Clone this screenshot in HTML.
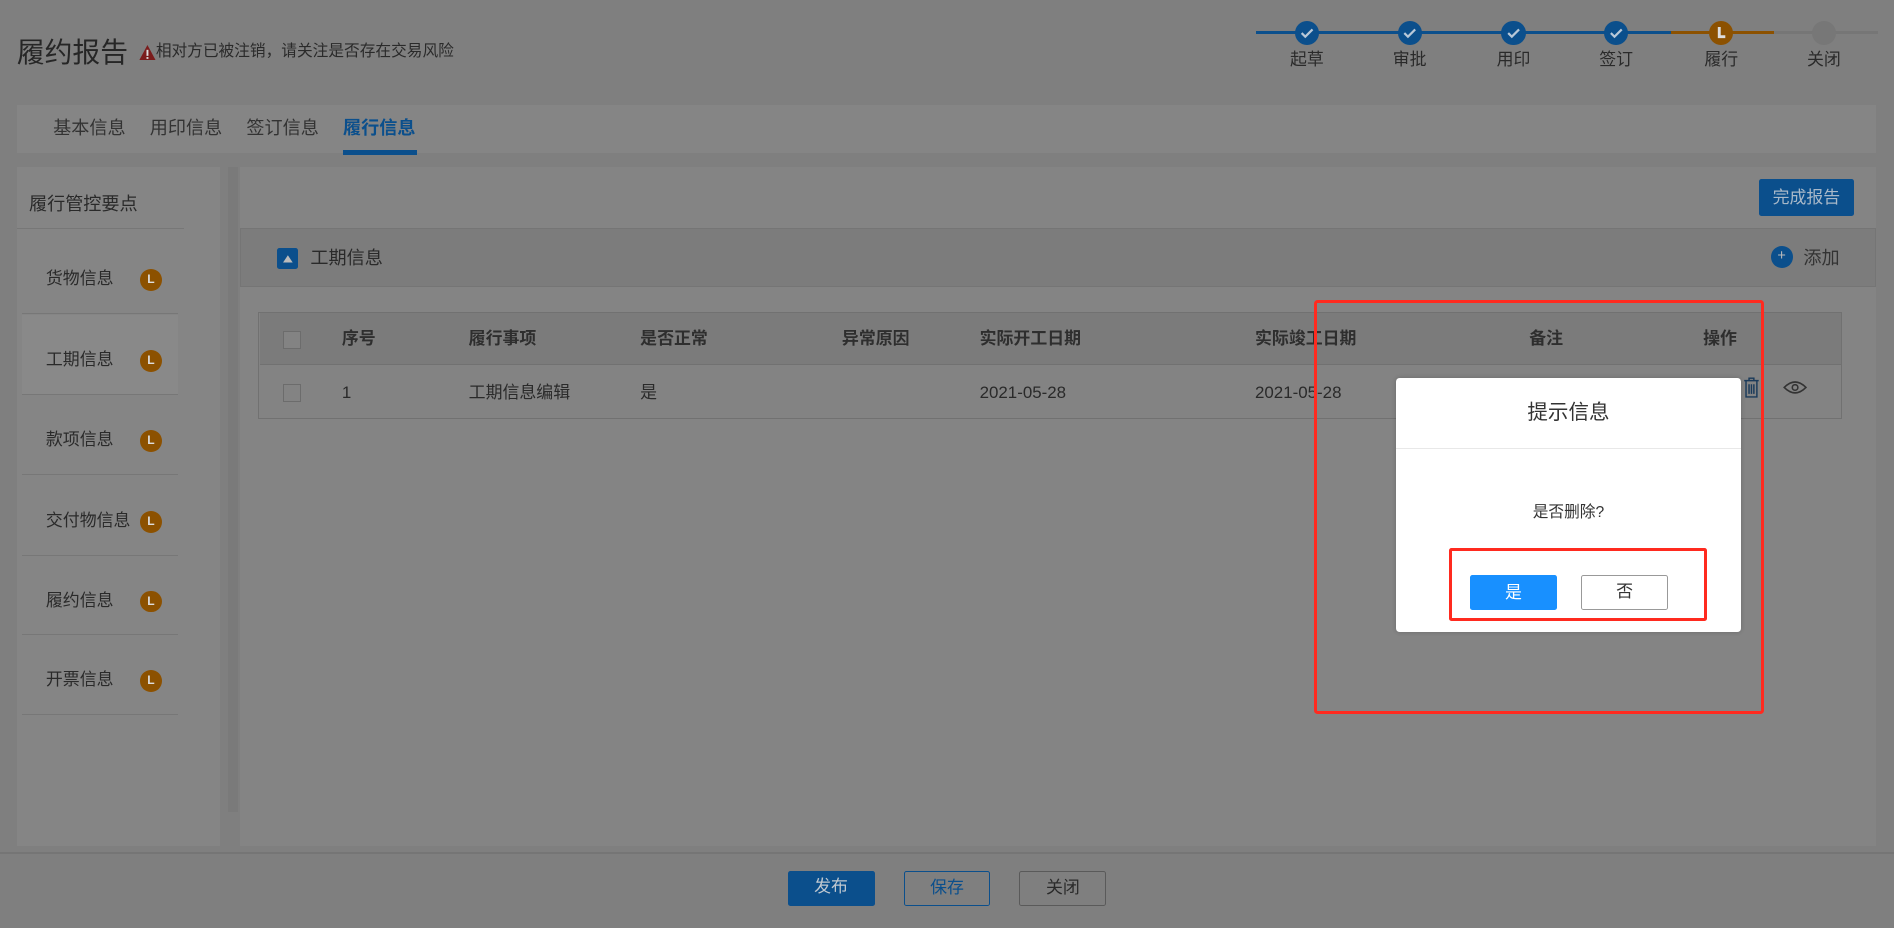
<!DOCTYPE html>
<html><head><meta charset="utf-8"><style>
*{margin:0;padding:0;box-sizing:border-box}
html,body{width:1894px;height:928px;overflow:hidden;background:#7f7f7f}
#w{zoom:1.2079;width:1568px;height:768px;position:relative;font-family:"Liberation Sans","Noto Sans CJK SC",sans-serif;color:#2a2a2a;font-size:14px;line-height:1.2}
.a{position:absolute;white-space:nowrap}
.c{position:absolute;width:20px;height:20px;border-radius:50%;top:17px}
.bl{background:#0b4f8c}
.or{background:#8c5100}
.lab{position:absolute;top:41px;font-size:14px;width:60px;text-align:center}
.item{position:absolute;left:18px;width:129px;height:66px;border-bottom:1px solid #777}
.item span{position:absolute;left:20px;top:29px;font-size:14px}
.item i{position:absolute;left:98px;top:29px;width:18px;height:18px;border-radius:50%;background:#8c5100;color:#ddd;font-style:normal;font-size:10px;text-align:center;line-height:18px;font-weight:bold}
.th{position:absolute;top:272px;font-weight:bold;font-size:14px;color:#2e2e2e}
.td{position:absolute;top:317px;font-size:14px}
.cb{position:absolute;left:234px;width:15px;height:15px;border:1px solid #6c6c6c;background:#838383}
.btn{position:absolute;top:721px;width:72px;height:29px;text-align:center;line-height:27px;font-size:14px;border-radius:2px}
</style></head><body><div id="w">
<div class="a" style="left:14px;top:30px;font-size:23px;color:#262626">履约报告</div>
<svg class="a" style="left:115px;top:37px" width="14" height="13" viewBox="0 0 14 13"><path d="M7 0L14 13H0Z" fill="#7a1c1c"/><rect x="6.2" y="4" width="1.6" height="5" fill="#ddd"/><rect x="6.2" y="10" width="1.6" height="1.5" fill="#ddd"/></svg>
<div class="a" style="left:129px;top:36px;font-size:13px;color:#2a2a2a">相对方已被注销，请关注是否存在交易风险</div>
<div class="a" style="left:1040px;top:26px;width:343px;height:2px;background:#0b4f8c"></div>
<div class="a" style="left:1383px;top:26px;width:86px;height:2px;background:#8c5100"></div>
<div class="a" style="left:1469px;top:26px;width:86px;height:2px;background:#767676"></div>
<div class="c bl" style="left:1072px"></div><div class="c bl" style="left:1157px"></div><div class="c bl" style="left:1243px"></div><div class="c bl" style="left:1328px"></div>
<svg class="a" style="left:1072px;top:17px" width="300" height="20"><g stroke="#b8c8d8" stroke-width="1.8" fill="none"><path d="M5.5 10l3 3 6-6"/><path d="M90.5 10l3 3 6-6"/><path d="M176.5 10l3 3 6-6"/><path d="M261.5 10l3 3 6-6"/></g></svg>
<div class="c or" style="left:1415px"></div>
<svg class="a" style="left:1415px;top:17px" width="20" height="20"><path d="M8.5 5v8h5" stroke="#ddd" stroke-width="2.4" fill="none"/></svg>
<div class="c" style="left:1500px;background:#777"></div>
<div class="lab" style="left:1052px">起草</div><div class="lab" style="left:1137px">审批</div><div class="lab" style="left:1223px">用印</div><div class="lab" style="left:1308px">签订</div><div class="lab" style="left:1395px">履行</div><div class="lab" style="left:1480px">关闭</div>
<div class="a" style="left:14px;top:87px;width:1539px;height:40px;background:#858585"></div>
<div class="a" style="left:44px;top:98px;font-size:15px;color:#333">基本信息</div>
<div class="a" style="left:124px;top:98px;font-size:15px;color:#333">用印信息</div>
<div class="a" style="left:204px;top:98px;font-size:15px;color:#333">签订信息</div>
<div class="a" style="left:284px;top:98px;font-size:15px;color:#0b4f8c;font-weight:bold">履行信息</div>
<div class="a" style="left:284px;top:124px;width:61px;height:4px;background:#0b4f8c"></div>
<div class="a" style="left:14px;top:138px;width:168px;height:562px;background:#858585"></div>
<div class="a" style="left:189px;top:138px;width:8px;height:534px;background:#7a7a7a"></div>
<div class="a" style="left:24px;top:161px;font-size:15px">履行管控要点</div>
<div class="a" style="left:14px;top:189px;width:138px;height:1px;background:#777"></div>
<div class="item" style="top:194px"><span>货物信息</span><i>L</i></div>
<div class="item" style="top:261px;background:#898989"><span>工期信息</span><i>L</i></div>
<div class="item" style="top:327px"><span>款项信息</span><i>L</i></div>
<div class="item" style="top:394px"><span>交付物信息</span><i>L</i></div>
<div class="item" style="top:460px"><span>履约信息</span><i>L</i></div>
<div class="item" style="top:526px"><span>开票信息</span><i>L</i></div>
<div class="a" style="left:199px;top:138px;width:1354px;height:562px;background:#848484"></div>
<div class="a" style="left:1456px;top:148px;width:79px;height:31px;background:#0b4f8c;border-radius:2px;color:#a9b9c9;font-size:14px;text-align:center;line-height:31px">完成报告</div>
<div class="a" style="left:199px;top:189px;width:1354px;height:49px;background:#7c7c7c;border:1px solid #757575"></div>
<div class="a" style="left:229px;top:205px;width:18px;height:18px;background:#0b4f8c;border-radius:2px"></div>
<svg class="a" style="left:229px;top:205px" width="18" height="18"><path d="M9 6l4 6H5z" fill="#bbb"/></svg>
<div class="a" style="left:257px;top:205px;font-size:15px">工期信息</div>
<div class="a" style="left:1466px;top:204px;width:18px;height:18px;border-radius:50%;background:#0b4f8c;color:#bbb;font-size:12px;text-align:center;line-height:18px">+</div>
<div class="a" style="left:1493px;top:205px;font-size:15px;color:#333">添加</div>
<div class="a" style="left:214px;top:258px;width:1311px;height:89px;border:1px solid #717171;background:#838383"></div>
<div class="a" style="left:215px;top:259px;width:1309px;height:43px;background:#7b7b7b;border-bottom:1px solid #717171"></div>
<div class="cb" style="top:274px"></div><div class="cb" style="top:318px"></div>
<div class="th" style="left:283px">序号</div><div class="th" style="left:388px">履行事项</div><div class="th" style="left:530px">是否正常</div><div class="th" style="left:697px">异常原因</div><div class="th" style="left:811px">实际开工日期</div><div class="th" style="left:1039px">实际竣工日期</div><div class="th" style="left:1266px">备注</div><div class="th" style="left:1410px">操作</div>
<div class="td" style="left:283px">1</div><div class="td" style="left:388px">工期信息编辑</div><div class="td" style="left:530px">是</div><div class="td" style="left:811px">2021-05-28</div><div class="td" style="left:1039px">2021-05-28</div>
<svg class="a" style="left:1476px;top:314px" width="20" height="14"><path d="M1 7Q10 -2 19 7Q10 16 1 7Z" fill="none" stroke="#333" stroke-width="1.3"/><circle cx="10" cy="7" r="2.3" fill="none" stroke="#333" stroke-width="1.3"/></svg>
<div class="a" style="left:0;top:705px;width:1568px;height:63px;background:#7f7f7f;border-top:2px solid #757575"></div>
<div class="btn" style="left:652px;background:#0b4f8c;color:#c0c8d0">发布</div>
<div class="btn" style="left:748px;border:1px solid #0b4f8c;color:#0b4f8c">保存</div>
<div class="btn" style="left:844px;border:1px solid #5a5a5a;color:#2a2a2a">关闭</div>
<div class="a" style="left:1156px;top:313px;width:285px;height:210px;background:#fff;border-radius:3px;box-shadow:0 0 4px rgba(0,0,0,.2)"></div>
<div class="a" style="left:1156px;top:332px;width:285px;text-align:center;font-size:17px;color:#333">提示信息</div>
<div class="a" style="left:1156px;top:371px;width:285px;height:1px;background:#e8e8e8"></div>
<div class="a" style="left:1156px;top:417px;width:285px;text-align:center;font-size:13px;color:#333">是否删除?</div>
<div class="a" style="left:1217px;top:476px;width:72px;height:29px;background:#1890ff;color:#fff;text-align:center;line-height:29px;font-size:14px;border-radius:2px">是</div>
<div class="a" style="left:1309px;top:476px;width:72px;height:29px;border:1px solid #999;color:#333;text-align:center;line-height:27px;font-size:14px;border-radius:2px">否</div>
<svg class="a" style="left:1443px;top:312px" width="14" height="18"><path d="M1 3h12M5 3V1h4v2M2.5 3.5v13h9v-13M5 6v8M7 6v8M9 6v8" stroke="#1a3a5a" stroke-width="1.2" fill="none"/></svg>
<div class="a" style="left:1088px;top:248px;width:372px;height:343px;border:3px solid #ff2a1f;border-radius:3px"></div>
<div class="a" style="left:1200px;top:454px;width:213px;height:60px;border:3px solid #ff2a1f;border-radius:2px"></div>
</div></body></html>
